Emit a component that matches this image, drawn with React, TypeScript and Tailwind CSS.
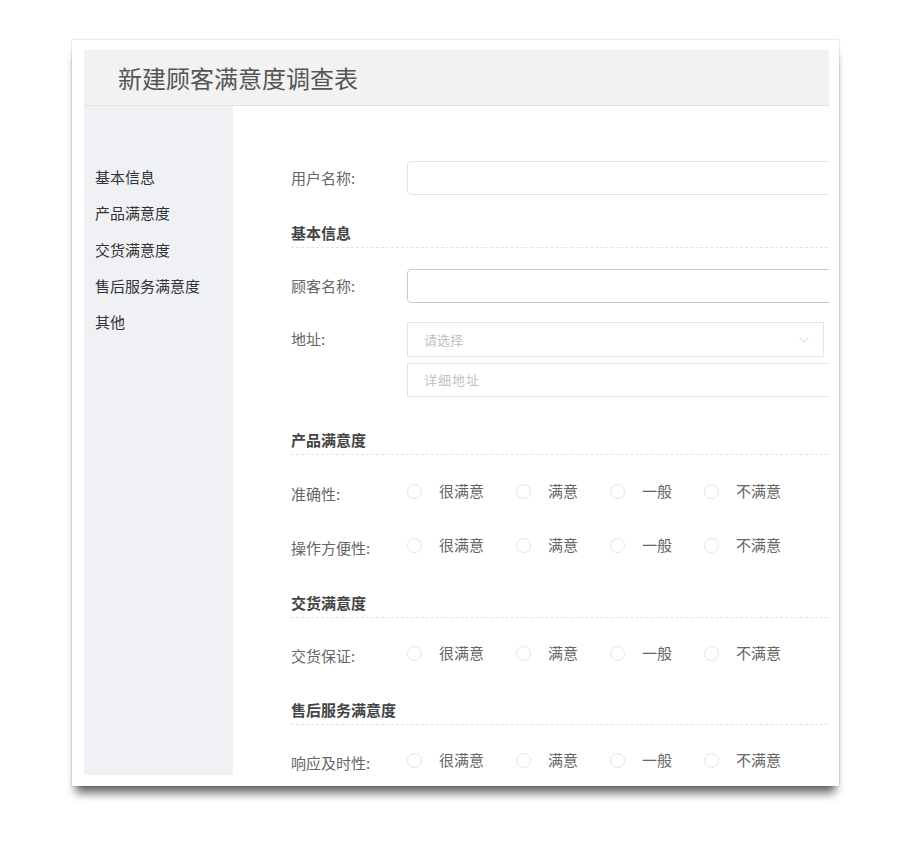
import { ChevronDown } from "lucide-react";

const sideItems = ["基本信息", "产品满意度", "交货满意度", "售后服务满意度", "其他"];
const options = ["很满意", "满意", "一般", "不满意"];

function SectionTitle({ title, className }: { title: string; className: string }) {
  return (
    <div className={`border-b border-dashed border-[#e3e3e3] pb-[4px] ${className}`}>
      <div className="text-[15px] leading-[20px] font-bold text-[#444]">{title}</div>
    </div>
  );
}

function RadioRow({ label, className }: { label: string; className: string }) {
  return (
    <div className={`flex h-[20px] items-start ${className}`}>
      <div className="w-[116px] shrink-0 pt-[3px] text-[15px] leading-[20px] text-[#666]">{label}</div>
      <div className="flex h-[20px] items-center">
        {options.map((opt) => (
          <div key={opt} className="mr-[32px] flex items-center">
            <span className="h-[15px] w-[15px] rounded-full border border-[#e2e4e8] bg-white"></span>
            <span className="ml-[17px] text-[15px] leading-[20px] text-[#666]">{opt}</span>
          </div>
        ))}
      </div>
    </div>
  );
}

export default function App() {
  return (
    <div className="min-h-[841px] w-[899px] bg-white pt-[40px] pl-[72px] font-['Noto_Sans_CJK_SC','Noto_Sans',sans-serif]">
      <div className="w-[767px] bg-white pt-[10px] pr-[10px] pb-[11px] pl-[12px] shadow-[0_0_2px_rgba(0,0,0,0.25),0_11px_9px_-4px_rgba(0,0,0,0.6)]">
        <div className="flex h-[725px] flex-col overflow-hidden">
          {/* header */}
          <div className="flex h-[56px] shrink-0 items-center border-b border-[#e2e2e2] bg-[#f2f2f2] pl-[34px]">
            <h1 className="text-[24px] leading-none text-[#555]">新建顾客满意度调查表</h1>
          </div>

          <div className="flex flex-1">
            {/* side nav */}
            <div className="w-[149px] shrink-0 bg-[#f0f1f5] pt-[53px] pl-[11px]">
              {sideItems.map((item) => (
                <div key={item} className="h-[36.3px] text-[15px] leading-[36px] text-[#333]">
                  {item}
                </div>
              ))}
            </div>

            {/* form */}
            <div className="w-[620px] shrink-0 pl-[58px]">
              <div className="mt-[55px] flex items-center">
                <div className="w-[116px] shrink-0 text-[15px] text-[#666]">用户名称:</div>
                <div className="h-[34px] flex-1 rounded-[4px] border border-[#e4e4e4]"></div>
              </div>

              <SectionTitle title="基本信息" className="mt-[28px]" />

              <div className="mt-[21px] flex items-center">
                <div className="w-[116px] shrink-0 text-[15px] text-[#666]">顾客名称:</div>
                <div className="h-[34px] flex-1 rounded-[4px] border border-[#c9c9c9]"></div>
              </div>

              <div className="mt-[19px] flex items-start">
                <div className="flex h-[35px] w-[116px] shrink-0 items-center text-[15px] text-[#666]">地址:</div>
                <div className="flex-1">
                  <div className="flex h-[35px] w-[417px] items-center justify-between border border-[#e6e6e6] pr-[10px] pl-[16px]">
                    <span className="text-[13px] text-[#c2c2c2]">请选择</span>
                    <ChevronDown className="h-[18px] w-[18px] text-[#c4c4c4]" strokeWidth={1.1} />
                  </div>
                  <div className="mt-[6px] flex h-[34px] items-center border border-[#e6e6e6] pl-[16px]">
                    <span className="text-[13px] tracking-[1px] text-[#c2c2c2]">详细地址</span>
                  </div>
                </div>
              </div>

              <SectionTitle title="产品满意度" className="mt-[33px]" />
              <RadioRow label="准确性:" className="mt-[26px]" />
              <RadioRow label="操作方便性:" className="mt-[34px]" />

              <SectionTitle title="交货满意度" className="mt-[38px]" />
              <RadioRow label="交货保证:" className="mt-[25px]" />

              <SectionTitle title="售后服务满意度" className="mt-[37px]" />
              <RadioRow label="响应及时性:" className="mt-[25px]" />
            </div>
          </div>
        </div>
      </div>
    </div>
  );
}
